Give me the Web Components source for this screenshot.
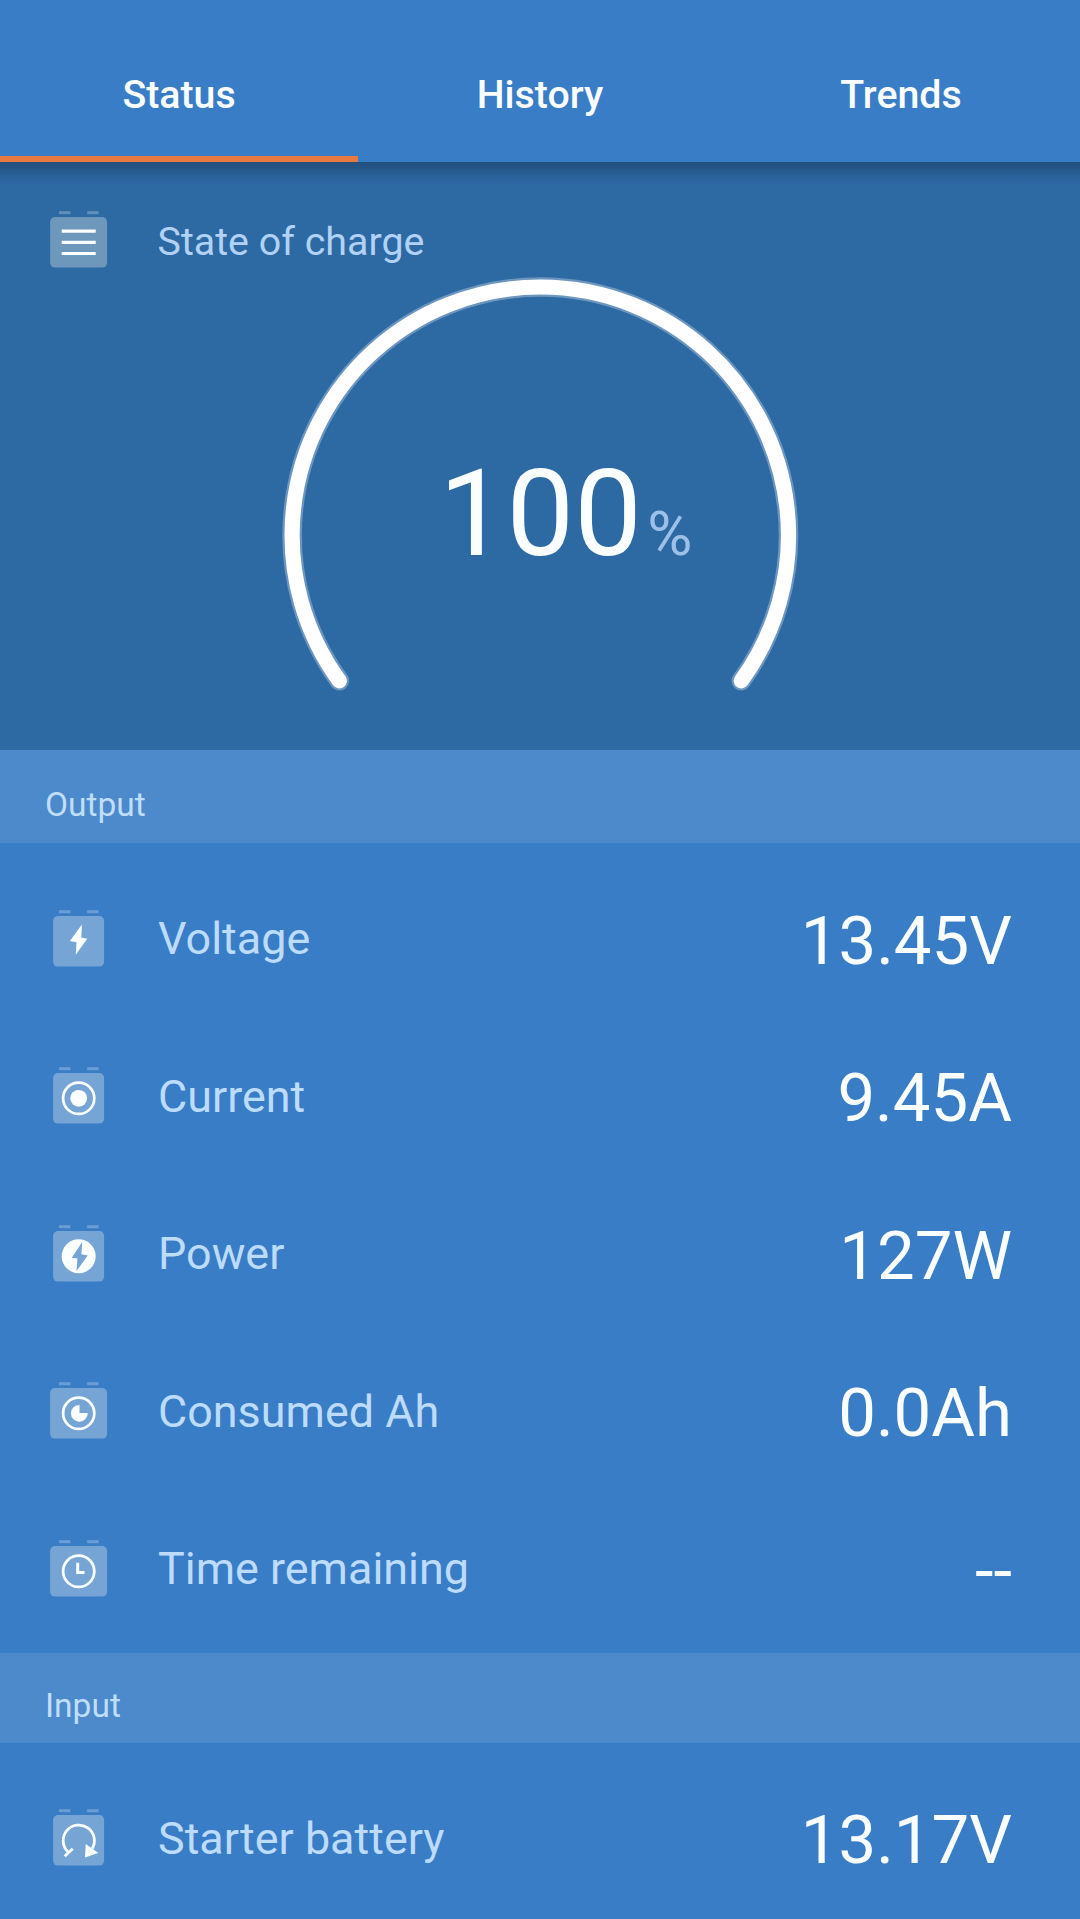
<!DOCTYPE html>
<html lang="en">
<head>
<meta charset="utf-8">
<title>Battery monitor</title>
<style>
  body {
    margin: 0;
    background: #397dc7;
    font-family: Roboto, "Liberation Sans", sans-serif;
    color: #fbfeff;
  }
</style>
</head>
<body>
<battery-app></battery-app>

<script>
// Glyphs are drawn around the centre of the battery body
const GLYPHS = {
  lines: `<path d="M-17 -11.2H17M-17 0H17M-17 11.2H17" stroke-width="3.2"/>`,
  bolt: `<path class="fill" d="M3.2 -16.8L-8.8 -.4L-2.2 .9L-3 13.5L8.6 -2.5L2.6 -3.8Z"/>`,
  target: `<circle r="15.6" stroke-width="2.7"/><circle class="fill" r="8.4"/>`,
  power: `<path class="fill" fill-rule="evenodd" d="M-17 0A17 17 0 1 1 17 0A17 17 0 1 1 -17 0ZM3.5 -14.2L-6.9 1.5L-1.2 2.3L-2.2 14.8L9 -.8L2.7 -2Z"/>`,
  pie: `<circle r="15.6" stroke-width="2.7"/><path class="fill" d="M.8 -8.4V-.4H9A8.4 8.4 0 1 1 .8 -8.4Z"/>`,
  clock: `<circle r="15.6" stroke-width="2.7"/><path d="M-1 -8.6V1.2H5.8" stroke-width="3"/>`,
  restart: `<path d="M-10.8 11.5A15.6 15.6 0 1 1 13.6 8.2" stroke-width="2.8"/><path d="M-14 16L-6 8.4" stroke-width="2.8"/><path class="fill" d="M7 3.8L19.6 12.6L6.3 17.2Z"/>`
};

class BatteryIcon extends HTMLElement {
  constructor() {
    super();
    this.attachShadow({ mode: "open" });
  }

  connectedCallback() {
    const wide = this.hasAttribute("wide");
    const w = wide ? 57 : 51;
    this.shadowRoot.innerHTML = `
      <style>
        :host { display: block; width: 60px; height: 62px; }
        svg { display: block; }
        .body { fill: #fffff4; fill-opacity: .31; }
        .pole { fill: #fff; fill-opacity: .26; }
        .glyph { fill: none; stroke: #fbffff; }
        .glyph .fill { fill: #fbffff; stroke: none; }
      </style>
      <svg width="60" height="62" viewBox="0 0 60 62">
        <rect class="pole" x="10" y="1.2" width="11.4" height="3"/>
        <rect class="pole" x="38.2" y="1.2" width="11.4" height="3"/>
        <rect class="body" x="${29.6 - w / 2}" y="7" width="${w}" height="50.6" rx="5"/>
        <g class="glyph" transform="translate(29.7 32.3)">${GLYPHS[this.getAttribute("name")]}</g>
      </svg>`;
  }
}
customElements.define("battery-icon", BatteryIcon);

class TabItem extends HTMLElement {
  constructor() {
    super();
    this.attachShadow({ mode: "open" });
    this.shadowRoot.innerHTML = `
      <style>
        :host {
          display: flex;
          align-items: center;
          justify-content: center;
          box-sizing: border-box;
          height: 162px;
          padding-top: 34px;
          border-bottom: 6px solid transparent;
          font-size: 39.3px;
          line-height: 46px;
          font-weight: 500;
        }
        :host([active]) { border-bottom-color: #e67a40; }
      </style>
      <slot></slot>`;
  }
}
customElements.define("tab-item", TabItem);

class TabBar extends HTMLElement {
  constructor() {
    super();
    this.attachShadow({ mode: "open" });
    this.shadowRoot.innerHTML = `
      <style>
        :host {
          display: grid;
          grid-template-columns: 358px 1fr 358px;
          height: 162px;
          background: #397dc7;
        }
      </style>
      <slot></slot>`;
  }
}
customElements.define("tab-bar", TabBar);

class ChargeGauge extends HTMLElement {
  constructor() {
    super();
    this.attachShadow({ mode: "open" });
    this.shadowRoot.innerHTML = `
      <style>
        :host { display: grid; width: 520px; height: 430px; }
        svg, .reading { grid-area: 1 / 1; }
        path { fill: none; stroke: #fff; stroke-linecap: round; }
        .halo { stroke-width: 19.6; stroke-opacity: .3; }
        .arc { stroke-width: 15.2; }
        .reading {
          display: flex;
          align-items: baseline;
          padding: 172px 0 0 159px;
          line-height: 144px;
          font-size: 120.3px;
        }
        .unit { font-size: 61.5px; color: #9dc0e8; margin-left: 5.5px; }
      </style>
      <svg width="520" height="430" viewBox="280 270 520 430">
        <path class="halo" d="M339.3 680.8A248.2 248.2 0 1 1 741.3 680.8"/>
        <path class="arc" d="M339.3 680.8A248.2 248.2 0 1 1 741.3 680.8"/>
      </svg>
      <div class="reading"><slot></slot><span class="unit"><slot name="unit"></slot></span></div>`;
  }
}
customElements.define("charge-gauge", ChargeGauge);

class ChargePanel extends HTMLElement {
  constructor() {
    super();
    this.attachShadow({ mode: "open" });
    this.shadowRoot.innerHTML = `
      <style>
        :host {
          display: block;
          box-sizing: border-box;
          height: 588px;
          padding-top: 50px;
          background: linear-gradient(#224f7d 0, #26578a 7px, #2b639c 15px, #2d69a3 24px);
        }
        header {
          display: flex;
          align-items: center;
          height: 58px;
          padding-left: 49px;
          gap: 48.5px;
          font-size: 39.4px;
          line-height: 48px;
          color: #b1d2f5;
        }
        .title { padding-top: 2px; }
        charge-gauge { margin: 0 0 0 280px; }
      </style>
      <header><battery-icon name="lines" wide></battery-icon><div class="title"><slot name="title"></slot></div></header>
      <charge-gauge><slot></slot><slot name="unit" slot="unit"></slot></charge-gauge>`;
  }
}
customElements.define("charge-panel", ChargePanel);

class SectionTitle extends HTMLElement {
  constructor() {
    super();
    this.attachShadow({ mode: "open" });
    this.shadowRoot.innerHTML = `
      <style>
        :host {
          display: flex;
          align-items: flex-end;
          box-sizing: border-box;
          height: 93px;
          padding: 0 45px 19px;
          background: #4c8acb;
          color: #c0defa;
          font-size: 33.5px;
          line-height: 38px;
        }
        :host([compact]) { height: 90px; padding-bottom: 18px; }
      </style>
      <slot></slot>`;
  }
}
customElements.define("section-title", SectionTitle);

class ReadingRow extends HTMLElement {
  constructor() {
    super();
    this.attachShadow({ mode: "open" });
  }

  connectedCallback() {
    const wide = this.hasAttribute("wide") ? "wide" : "";
    this.shadowRoot.innerHTML = `
      <style>
        :host {
          display: flex;
          align-items: center;
          height: 157.5px;
          padding: 0 68px 0 49px;
        }
        .label {
          flex: 1;
          padding: 0 0 1px 49px;
          font-size: 44.9px;
          line-height: 52px;
          color: #bddbfa;
        }
        .value {
          padding-top: 2px;
          font-size: 67.1px;
          line-height: 80px;
        }
      </style>
      <battery-icon name="${this.getAttribute("icon")}" ${wide}></battery-icon>
      <div class="label">${this.getAttribute("label")}</div>
      <div class="value"><slot></slot></div>`;
  }
}
customElements.define("reading-row", ReadingRow);

class ReadingList extends HTMLElement {
  constructor() {
    super();
    this.attachShadow({ mode: "open" });
    this.shadowRoot.innerHTML = `
      <style>
        :host { display: block; padding: 18px 0 4px; }
      </style>
      <slot></slot>`;
  }
}
customElements.define("reading-list", ReadingList);

class BatteryApp extends HTMLElement {
  constructor() {
    super();
    this.attachShadow({ mode: "open" });
    this.shadowRoot.innerHTML = `
      <style>
        :host { display: block; width: 1080px; height: 1919px; overflow: hidden; }
      </style>
      <tab-bar>
        <tab-item active>Status</tab-item>
        <tab-item>History</tab-item>
        <tab-item>Trends</tab-item>
      </tab-bar>
      <charge-panel>
        <span slot="title">State of charge</span>100<span slot="unit">%</span>
      </charge-panel>
      <section-title>Output</section-title>
      <reading-list>
        <reading-row icon="bolt" label="Voltage">13.45V</reading-row>
        <reading-row icon="target" label="Current">9.45A</reading-row>
        <reading-row icon="power" label="Power">127W</reading-row>
        <reading-row icon="pie" label="Consumed Ah" wide>0.0Ah</reading-row>
        <reading-row icon="clock" label="Time remaining" wide>--</reading-row>
      </reading-list>
      <section-title compact>Input</section-title>
      <reading-list>
        <reading-row icon="restart" label="Starter battery">13.17V</reading-row>
      </reading-list>`;
  }
}
customElements.define("battery-app", BatteryApp);
</script>
</body>
</html>
